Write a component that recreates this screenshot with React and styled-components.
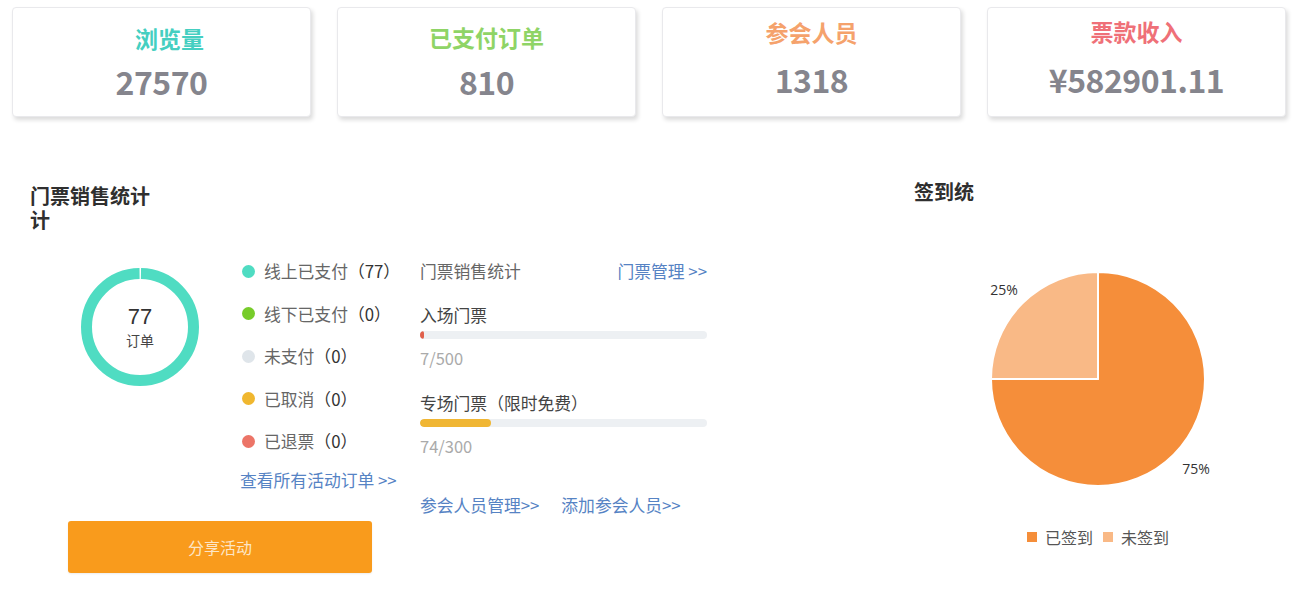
import React from "react";
import styled, { createGlobalStyle } from "styled-components";

const Global = createGlobalStyle`
  html, body { margin: 0; padding: 0; background: #fff; }
  body { font-family: "Noto Sans CJK SC", "Noto Sans", sans-serif; color: #333; }
`;

const Page = styled.div`
  width: 1302px;
  height: 591px;
  overflow: hidden;
  background: #fff;
`;

const CardRow = styled.div`
  display: flex;
  gap: 26px;
  padding: 7px 0 0 12px;
`;

const Card = styled.div`
  width: 299px;
  height: 110px;
  box-sizing: border-box;
  border: 1px solid #e9e9ec;
  border-radius: 4px;
  background: #fff;
  box-shadow: 2px 3px 4px rgba(0, 0, 0, 0.14);
  display: flex;
  flex-direction: column;
  align-items: center;
`;

const CardTitle = styled.div`
  margin-top: ${(p) => p.$top}px;
  transform: translateX(${(p) => p.$dx || 0}px);
  font-size: 23px;
  line-height: 30px;
  font-weight: 700;
  color: ${(p) => p.$color};
`;

const CardValue = styled.div`
  margin-top: ${(p) => p.$gap}px;
  font-size: 32px;
  line-height: 34px;
  font-weight: 700;
  color: #85858d;
  letter-spacing: -0.5px;
`;

const Bottom = styled.div`
  display: flex;
  padding-left: 30px;
  margin-top: 67px;
`;

const LeftPanel = styled.div`
  width: 884px;
`;

const SectionTitle = styled.div`
  width: ${(p) => p.$w || "auto"};
  font-size: 20px;
  line-height: 24px;
  font-weight: 700;
  color: #2f2f2f;
`;

const StatsRow = styled.div`
  display: flex;
  margin-top: 18px;
`;

const LeftSub = styled.div`
  width: 390px;
  display: flex;
  flex-direction: column;
`;

const DonutLegend = styled.div`
  display: flex;
`;

const DonutBox = styled.div`
  position: relative;
  width: 118px;
  height: 118px;
  margin: 18px 0 0 51px;
`;

const DonutCenter = styled.div`
  position: absolute;
  inset: 0;
  display: flex;
  flex-direction: column;
  align-items: center;
  justify-content: center;
  padding-top: 1px;
  box-sizing: border-box;
`;

const DonutNum = styled.div`
  font-family: "Liberation Sans", "Noto Sans", sans-serif;
  font-size: 22px;
  line-height: 24px;
  color: #333;
`;

const DonutLabel = styled.div`
  margin-top: 1px;
  font-size: 14px;
  line-height: 20px;
  color: #444;
`;

const Legend = styled.div`
  margin-left: 43px;
  display: flex;
  flex-direction: column;
`;

const LegendItem = styled.div`
  display: flex;
  align-items: center;
  height: 42.5px;
  font-size: 16.8px;
  color: #666;
`;

const Dot = styled.span`
  width: 13px;
  height: 13px;
  border-radius: 50%;
  background: ${(p) => p.$color};
  margin-right: 9px;
`;

const Count = styled.span`
  color: #333;
`;

const Link = styled.a`
  font-size: 16.8px;
  line-height: 22px;
  color: #5683c4;
  text-decoration: none;
  margin-top: ${(p) => p.$mt || "0"};
  margin-left: ${(p) => p.$ml || "0"};
  white-space: nowrap;
`;

const ShareButton = styled.button`
  margin: 30px 0 0 38px;
  width: 304px;
  height: 52px;
  border: none;
  border-radius: 3px;
  background: #f99b1c;
  color: #fde6c6;
  font-family: inherit;
  font-size: 16px;
  box-shadow: 0 1px 2px rgba(0, 0, 0, 0.08);
`;

const TicketCol = styled.div`
  width: 287px;
  display: flex;
  flex-direction: column;
`;

const TicketHead = styled.div`
  display: flex;
  justify-content: space-between;
  align-items: center;
  height: 42px;
  font-size: 16.8px;
  color: #666;
`;

const TicketName = styled.div`
  margin-top: ${(p) => p.$mt};
  font-size: 16.8px;
  line-height: 24px;
  color: #444;
`;

const Track = styled.div`
  margin-top: 4px;
  height: 8px;
  border-radius: 4px;
  background: #edf0f3;
  overflow: hidden;
`;

const Fill = styled.div`
  height: 100%;
  border-radius: 4px;
  background: ${(p) => p.$color};
`;

const TicketCount = styled.div`
  margin-top: ${(p) => p.$mt};
  font-size: 16.5px;
  line-height: 20px;
  color: #aaa;
`;

const LinkRow = styled.div`
  display: flex;
  gap: 22px;
  margin-top: 38px;
`;

const RightPanel = styled.div`
  width: 368px;
  margin-top: -4px;
  display: flex;
  flex-direction: column;
`;

const PieSvg = styled.svg`
  display: block;
  margin-top: 57px;
`;

const PieLegend = styled.div`
  display: flex;
  justify-content: center;
  align-items: center;
  margin-top: 26px;
  font-size: 16px;
  line-height: 20px;
  color: #555;
`;

const Square = styled.span`
  width: 10px;
  height: 10px;
  background: ${(p) => p.$color};
  margin: 0 8px 0 ${(p) => p.$ml || "0"};
`;

const cards = [
  { title: "浏览量", value: "27570", color: "#45cfc1", top: 15, gap: 11, dx: 8 },
  { title: "已支付订单", value: "810", color: "#8fd466", top: 14, gap: 12, dx: 0 },
  { title: "参会人员", value: "1318", color: "#f5a26c", top: 9, gap: 15, dx: 0 },
  { title: "票款收入", value: "¥582901.11", color: "#ef7078", top: 8, gap: 16, dx: 0 },
];

const legend = [
  { label: "线上已支付", n: 77, color: "#4fdcc2" },
  { label: "线下已支付", n: 0, color: "#77cc2a" },
  { label: "未支付", n: 0, color: "#dfe5ea" },
  { label: "已取消", n: 0, color: "#f0b72f" },
  { label: "已退票", n: 0, color: "#ec7467" },
];

function Donut() {
  const r = 53.5;
  const c = 2 * Math.PI * r;
  const gap = 2;
  return (
    <DonutBox>
      <svg width="118" height="118" viewBox="0 0 118 118">
        <circle
          cx="59"
          cy="59"
          r={r}
          fill="none"
          stroke="#4fdcc2"
          strokeWidth="11"
          strokeDasharray={`${c - gap} ${gap}`}
          strokeDashoffset={-gap / 2}
          transform="rotate(-90 59 59)"
        />
      </svg>
      <DonutCenter>
        <DonutNum>77</DonutNum>
        <DonutLabel>订单</DonutLabel>
      </DonutCenter>
    </DonutBox>
  );
}

function Pie() {
  const cx = 184;
  const cy = 118;
  const r = 107;
  return (
    <PieSvg width="368" height="240" viewBox="0 0 368 240">
      <path
        d={`M${cx} ${cy} L${cx} ${cy - r} A${r} ${r} 0 1 1 ${cx - r} ${cy} Z`}
        fill="#f58e3a"
        stroke="#fff"
        strokeWidth="2"
        strokeLinejoin="round"
      />
      <path
        d={`M${cx} ${cy} L${cx - r} ${cy} A${r} ${r} 0 0 1 ${cx} ${cy - r} Z`}
        fill="#f9b986"
        stroke="#fff"
        strokeWidth="2"
        strokeLinejoin="round"
      />
      <text
        x="90"
        y="34"
        textAnchor="middle"
        fontFamily="'Open Sans', 'Noto Sans', sans-serif"
        fontSize="14"
        fill="#333"
      >
        25%
      </text>
      <text
        x="282"
        y="213"
        textAnchor="middle"
        fontFamily="'Open Sans', 'Noto Sans', sans-serif"
        fontSize="14"
        fill="#333"
      >
        75%
      </text>
    </PieSvg>
  );
}

export default function App() {
  return (
    <Page>
      <Global />
      <CardRow>
        {cards.map((c) => (
          <Card key={c.title}>
            <CardTitle $color={c.color} $top={c.top} $dx={c.dx}>
              {c.title}
            </CardTitle>
            <CardValue $gap={c.gap}>{c.value}</CardValue>
          </Card>
        ))}
      </CardRow>
      <Bottom>
        <LeftPanel>
          <SectionTitle $w="124px">门票销售统计计</SectionTitle>
          <StatsRow>
            <LeftSub>
              <DonutLegend>
                <Donut />
                <Legend>
                  {legend.map((l) => (
                    <LegendItem key={l.label}>
                      <Dot $color={l.color} />
                      {l.label}
                      <Count>（{l.n}）</Count>
                    </LegendItem>
                  ))}
                  <Link href="#" $mt="6px" $ml="-2px">
                    查看所有活动订单 &gt;&gt;
                  </Link>
                </Legend>
              </DonutLegend>
              <ShareButton>分享活动</ShareButton>
            </LeftSub>
            <TicketCol>
              <TicketHead>
                <span>门票销售统计</span>
                <Link href="#">门票管理 &gt;&gt;</Link>
              </TicketHead>
              <TicketName $mt="11px">入场门票</TicketName>
              <Track>
                <Fill $color="#e0604c" style={{ width: `${(7 / 500) * 100}%` }} />
              </Track>
              <TicketCount $mt="9px">7/500</TicketCount>
              <TicketName $mt="23px">专场门票（限时免费）</TicketName>
              <Track>
                <Fill $color="#f0b634" style={{ width: `${(74 / 300) * 100}%` }} />
              </Track>
              <TicketCount $mt="9px">74/300</TicketCount>
              <LinkRow>
                <Link href="#">参会人员管理&gt;&gt;</Link>
                <Link href="#">添加参会人员&gt;&gt;</Link>
              </LinkRow>
            </TicketCol>
          </StatsRow>
        </LeftPanel>
        <RightPanel>
          <SectionTitle>签到统</SectionTitle>
          <Pie />
          <PieLegend>
            <Square $color="#f58e3a" />
            已签到
            <Square $color="#f9b986" $ml="10px" />
            未签到
          </PieLegend>
        </RightPanel>
      </Bottom>
    </Page>
  );
}
